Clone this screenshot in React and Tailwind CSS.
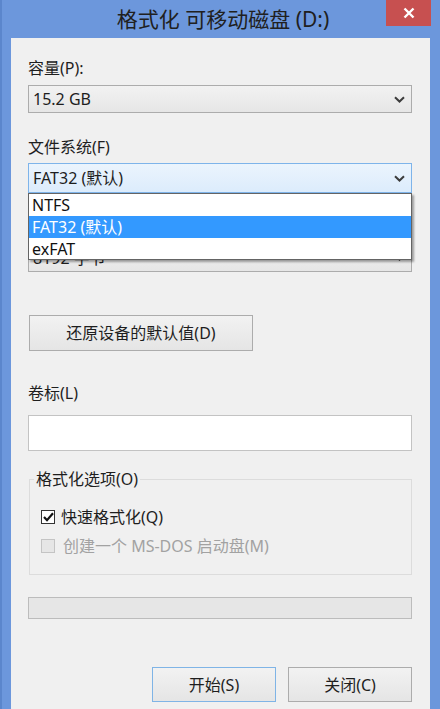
import React from "react";

const Chevron = ({ color = "#3c3c3c" }) => (
  <svg width="11" height="7" viewBox="0 0 11 7">
    <path d="M1 1.2 L5.5 5.5 L10 1.2" stroke={color} strokeWidth="2" fill="none" />
  </svg>
);

const Label = ({ children, className = "" }) => (
  <div className={`h-[20px] leading-[20px] text-[16px] text-[#1e1e1e] ${className}`}>{children}</div>
);

const App = () => {
  return (
    <div className="w-[440px] h-[709px] overflow-hidden bg-[#6c97dc] border-l-2 border-[#5b86cc] flex flex-col font-['Noto_Sans','Noto_Sans_CJK_SC',sans-serif] relative">
      {/* title bar */}
      <div className="h-[38px] flex items-center justify-center text-[21px] leading-[38px] text-[#202020] pl-[4px]">
        格式化 可移动磁盘 (D:)
      </div>
      <div className="absolute right-[9px] top-0 w-[45px] h-[26px] bg-[#c75050] flex items-center justify-center">
        <svg width="12" height="12" viewBox="0 0 12 12">
          <path d="M1.5 1.5 L10.5 10.5 M10.5 1.5 L1.5 10.5" stroke="#fff" strokeWidth="2.4" />
        </svg>
      </div>

      {/* body */}
      <div className="flex-1 ml-[9px] mr-[10px] bg-[#f0f0f0] pl-[17px] pr-[18px] pt-[20px] flex flex-col">
        <Label>容量(P):</Label>
        <div className="mt-[7px] h-[28px] border border-[#acacac] bg-gradient-to-b from-[#f2f2f2] to-[#e6e6e6] flex items-center justify-between pl-[4px] pr-[6px] text-[16px] text-[#1e1e1e]">
          <span>15.2 GB</span>
          <Chevron />
        </div>

        <Label className="mt-[24px]">文件系统(F)</Label>
        <div className="relative mt-[6px]">
          <div className="h-[30px] border border-[#7eb4ea] bg-gradient-to-b from-[#ebf4fd] to-[#dcecfc] flex items-center justify-between pl-[4px] pr-[6px] text-[16px] text-[#1e1e1e]">
            <span>FAT32 (默认)</span>
            <Chevron />
          </div>
          {/* open dropdown list, covers the allocation size label */}
          <div className="absolute left-0 right-0 top-[30px] z-10 bg-white border border-[#646464] shadow-[2px_2px_2px_rgba(0,0,0,0.35)] text-[16px] leading-[22px]">
            <div className="h-[22px] pl-[3px] text-[#111]">NTFS</div>
            <div className="h-[22px] pl-[3px] bg-[#3399ff] text-white">FAT32 (默认)</div>
            <div className="h-[21px] pl-[3px] text-[#111]">exFAT</div>
          </div>
        </div>

        <div className="mt-[24px] h-[20px]"></div>
        <div className="mt-[6px] h-[29px] border border-[#acacac] bg-gradient-to-b from-[#f2f2f2] to-[#e6e6e6] flex items-center justify-between pl-[4px] pr-[6px] text-[16px] text-[#1e1e1e]">
          <span>8192 字节</span>
          <Chevron />
        </div>

        <button className="mt-[43px] ml-px w-[224px] h-[36px] border border-[#acacac] bg-gradient-to-b from-[#f2f2f2] to-[#e5e5e5] text-[16px] text-[#1e1e1e]">
          还原设备的默认值(D)
        </button>

        <Label className="mt-[32px]">卷标(L)</Label>
        <div className="mt-[12px] h-[36px] bg-white border border-[#c3c3c3]"></div>

        <fieldset className="mt-[18px] ml-px border border-[#dcdcdc] pl-[11px] pr-[11px] pb-[18px]">
          <legend className="ml-[-7px] px-[2px] h-[20px] leading-[20px] text-[16px] text-[#1e1e1e]">格式化选项(O)</legend>
          <div className="mt-[18px] h-[20px] flex items-center gap-[6px] text-[16px] text-[#1e1e1e]">
            <div className="w-[14px] h-[14px] bg-white border border-[#333] flex items-center justify-center">
              <svg width="11" height="10" viewBox="0 0 11 10">
                <path d="M1 5 L4 8.2 L10 1.2" stroke="#111" strokeWidth="2.2" fill="none" />
              </svg>
            </div>
            <span>快速格式化(Q)</span>
          </div>
          <div className="mt-[9px] h-[20px] flex items-center gap-[8px] text-[16px] text-[#a2a2a2]">
            <div className="w-[14px] h-[14px] bg-[#e6e6e6] border border-[#c4c4c4]"></div>
            <span>创建一个 MS-DOS 启动盘(M)</span>
          </div>
        </fieldset>

        <div className="mt-[22px] h-[22px] bg-[#e6e6e6] border border-[#bcbcbc]"></div>

        <div className="mt-[48px] flex justify-end gap-[12px]">
          <button className="w-[124px] h-[35px] border border-[#7fb4e6] bg-gradient-to-b from-[#f2f2f2] to-[#e5e5e5] text-[16px] text-[#1e1e1e]">
            开始(S)
          </button>
          <button className="w-[124px] h-[35px] border border-[#acacac] bg-gradient-to-b from-[#f2f2f2] to-[#e5e5e5] text-[16px] text-[#1e1e1e]">
            关闭(C)
          </button>
        </div>
      </div>
    </div>
  );
};

export default App;
